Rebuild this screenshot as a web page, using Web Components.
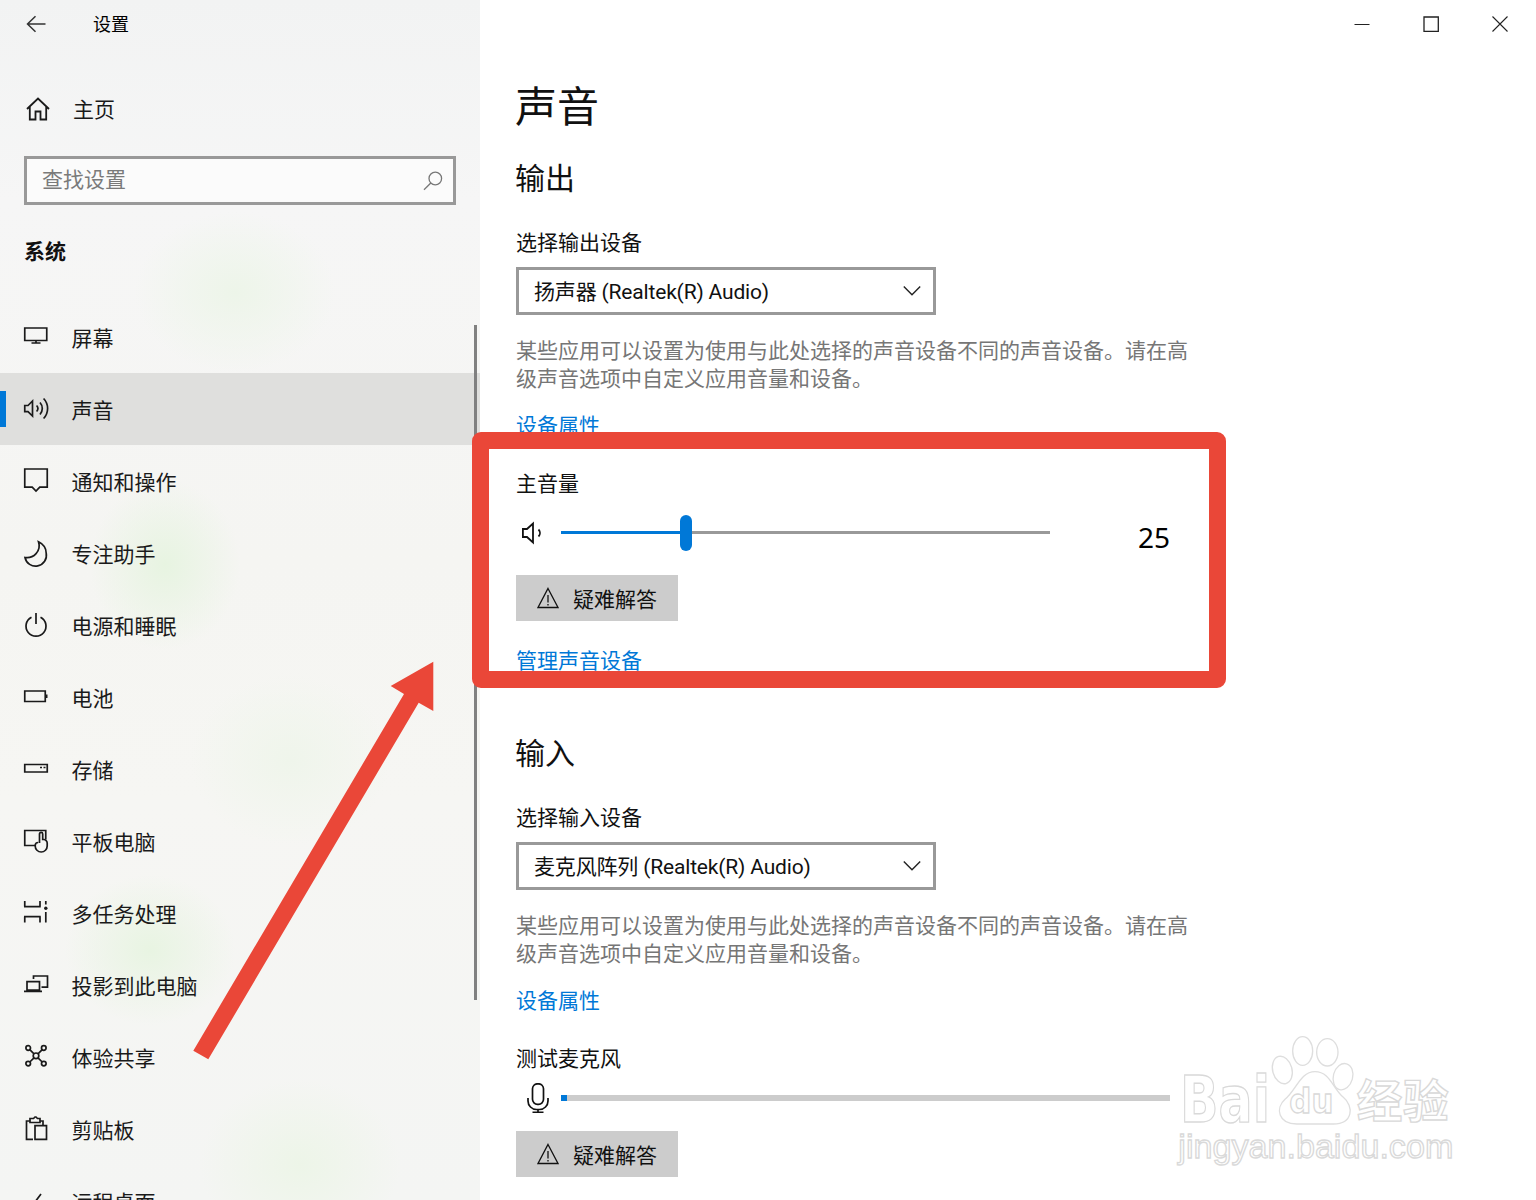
<!DOCTYPE html>
<html lang="zh-CN"><head><meta charset="utf-8"><title>设置</title>
<style>
html,body{margin:0;padding:0;height:1200px;overflow:hidden;background:#fff}
body{font-family:"Noto Sans CJK SC","Noto Sans",sans-serif;font-size:21px;color:#000}
</style></head>
<body>
<settings-app>
  <settings-sidebar slot="side">
    <nav-item icon="monitor">屏幕</nav-item>
    <nav-item icon="sound" selected>声音</nav-item>
    <nav-item icon="note">通知和操作</nav-item>
    <nav-item icon="moon">专注助手</nav-item>
    <nav-item icon="power">电源和睡眠</nav-item>
    <nav-item icon="battery">电池</nav-item>
    <nav-item icon="storage">存储</nav-item>
    <nav-item icon="tablet">平板电脑</nav-item>
    <nav-item icon="multi">多任务处理</nav-item>
    <nav-item icon="project">投影到此电脑</nav-item>
    <nav-item icon="share">体验共享</nav-item>
    <nav-item icon="clip">剪贴板</nav-item>
    <nav-item icon="remote">远程桌面</nav-item>
  </settings-sidebar>
  <sound-page slot="main"></sound-page>
  <page-annotations slot="over"></page-annotations>
</settings-app>
<script>
const ICONS={
monitor:'<path d="M.75 3h22v12.5H.75zM12 15.500v2.200M7.500 18h9"/>',
sound:'<path d="M.75 8.500H4L8.500 4v15L4 14.600H.75z"/><path d="M12.600 8.500a4.500 4.500 0 0 1 0 6M16 5.500a9 9 0 0 1 0 12M19.600 1.500a14.500 14.500 0 0 1 0 20"/>',
note:'<path d="M.75 0h22.500v18.200h-7.500L12 22l-3.800-3.800H.75z"/>',
moon:'<path d="M14.500.8C19 3 22.200 7.300 22.200 12.200A10.600 10.600 0 0 1 1 16.500C9.500 17.800 17.500 10 14.500.8z"/>',
power:'<path d="M7.500 4.200a10 10 0 1 0 9 0M12 0v11"/>',
battery:'<path d="M.75 6h20.500v10.500H.75z"/><path d="M22.500 9.500v3.500" stroke-width="2"/>',
storage:'<path d="M.75 7.500h22.500v7.500H.75z"/><path d="M16 10.500h2M19.500 10.500h2" stroke-width="1.500"/>',
tablet:'<path d="M11 16.500H.75V1.500h21v9"/><path d="M15.500 14V5a1.600 1.600 0 0 1 3.200 0v5.500h1a3.500 3.500 0 0 1 3.500 3.500v3a6 6 0 0 1-12 0v-.5a3 3 0 0 1 3-3"/>',
multi:'<path d="M.75 0v5.500M16 0v5.500M0 5.700h16.750M0 15.700h16.750M.75 15.700V21.500M16 15.700V21.500M21.800 0v3.500M21.800 11v10.500"/><circle cx="21.800" cy="7.300" r="1.700" fill="currentColor" stroke="none"/>',
project:'<path d="M9.500 6V3h14v11.200h-6"/><path d="M3 8.700h12.500v8.500H3zM0 18.300h18"/>',
share:'<circle cx="12" cy="10.800" r="2.800"/><circle cx="4.200" cy="3" r="2.300"/><circle cx="19.800" cy="3" r="2.300"/><circle cx="4.200" cy="18.600" r="2.300"/><circle cx="19.800" cy="18.600" r="2.300"/><path d="M5.800 4.600 10 8.800M18.200 4.600 14 8.800M5.800 17 10 12.800M18.200 17 14 12.800"/>',
clip:'<path d="M9 22.300H2.500V4H6M16 4h3v5"/><path d="M6 5.500V1.500h3.500L11 0h1l1.500 1.500H16v4z"/><path d="M11 8.700h11.500v13.600H11z"/>',
remote:'<path d="M3 12l5 5 9-12"/>'
};
function svg(name,size=24){return `<svg width="${size}" height="${size}" viewBox="0 0 24 24" fill="none" stroke="currentColor" stroke-width="1.700">${ICONS[name]}</svg>`}
function def(tag,html){
  customElements.define(tag,class extends HTMLElement{
    constructor(){super();const r=this.attachShadow({mode:'open'});r.innerHTML=typeof html==='function'?html(this):html;}
  });
}
def('settings-app',`<style>
:host{display:flex;width:1536px;height:1200px;position:relative;overflow:hidden}
.s{width:480px;flex:none}.m{flex:1;min-width:0}
</style><div class="s"><slot name="side"></slot></div><div class="m"><slot name="main"></slot></div><slot name="over"></slot>`);

def('settings-sidebar',`<style>
:host{display:block;height:1200px;overflow:hidden;position:relative;
background:
radial-gradient(ellipse 100px 80px at 235px 292px,#edf5e9 0,rgba(237,245,233,0) 100%),
radial-gradient(ellipse 75px 85px at 165px 565px,#e7f4e1 0,rgba(231,244,225,0) 100%),
radial-gradient(ellipse 100px 85px at 290px 760px,#eff5eb 0,rgba(239,245,235,0) 100%),
radial-gradient(ellipse 85px 75px at 150px 950px,#e8f4e2 0,rgba(232,244,226,0) 100%),
radial-gradient(ellipse 100px 85px at 300px 1165px,#edf5e8 0,rgba(237,245,232,0) 100%),
linear-gradient(180deg,#f2f3f3 0,#f6f6f6 200px,#f5f5f2 560px,#f6f6f3 800px,#f4f5f3 1200px)}
.bar{height:48px;display:flex;align-items:center;padding-left:24px;box-sizing:border-box}
.back{width:69px;height:48px;display:flex;align-items:center;color:#333;flex:none}
.t{font-size:18px;line-height:22px;padding-bottom:2px;margin-left:0}
.home{height:72px;margin-top:25px;display:flex;align-items:center;padding-left:26px;color:#1a1a1a}
.home span{margin-left:23px;line-height:26px;padding-bottom:2px}
.search{margin:11px 24px 0;height:49px;box-sizing:border-box;border:3px solid #999;background:rgba(255,255,255,.55);display:flex;align-items:center;justify-content:space-between;padding:0 10px 0 15px;color:#7a7a7a}
.search span{line-height:24px;padding-bottom:6px}
.search svg{display:block}
h2{font:inherit;font-weight:700;margin:33px 0 35px 24px;line-height:24px;padding-bottom:4px;color:#111}
.thumb{position:absolute;left:474px;top:325px;width:3px;height:675px;background:#808080}
</style>
<div class="bar"><div class="back"><svg width="24" height="24" viewBox="0 0 24 24" fill="none" stroke="currentColor" stroke-width="1.500"><path d="M21.500 12H3.500M11.500 4.200 3.500 12l8 7.800"/></svg></div><span class="t">设置</span></div>
<div class="home"><svg width="24" height="24" viewBox="0 0 24 24" fill="none" stroke="#1a1a1a" stroke-width="1.800"><path d="M1 12 12 1.500 23 12M3.800 10v12.500h5.700v-8h5v8h5.700V10"/></svg><span>主页</span></div>
<div class="search"><span>查找设置</span><svg width="20" height="20" viewBox="0 0 20 20" fill="none" stroke="#777" stroke-width="1.300"><circle cx="12.300" cy="7.500" r="6.300"/><path d="M7.800 12 1 18.800"/></svg></div>
<h2>系统</h2>
<slot></slot>
<div class="thumb"></div>`);

def('nav-item',el=>`<style>
:host{display:flex;align-items:center;height:72px;padding-left:24px;position:relative;color:#1a1a1a;box-sizing:border-box}
:host([selected]){background:#dfdfdd}
:host([selected])::before{content:"";position:absolute;left:0;top:18px;width:6px;height:36px;background:#0078d7}
svg{display:block;flex:none;margin-right:23.500px;overflow:visible}
span{line-height:28px}
</style>${svg(el.getAttribute('icon'))}<span><slot></slot></span>`);

def('window-controls',`<style>
:host{display:flex;justify-content:flex-end;height:48px;padding-right:2px;color:#222}
div{width:69px;height:48px;display:flex;align-items:center;justify-content:center}
svg{display:block}
</style>
<div><svg width="16" height="16" viewBox="0 0 16 16" fill="none" stroke="currentColor"><path d="M.5 8.500h15"/></svg></div>
<div><svg width="16" height="16" viewBox="0 0 16 16" fill="none" stroke="currentColor" stroke-width="1.300"><path d="M1 1h14.300v14.300H1z"/></svg></div>
<div><svg width="16" height="16" viewBox="0 0 16 16" fill="none" stroke="currentColor" stroke-width="1.100"><path d="M.5.500l15 15M15.500.500l-15 15"/></svg></div>`);

def('select-box',`<style>
:host{display:flex;align-items:center;justify-content:space-between;width:420px;height:48px;box-sizing:border-box;border:3px solid #999;padding:0 12px 0 15px;color:#111}
span{line-height:28px;padding-top:1px;white-space:nowrap;letter-spacing:-.17px;font-family:Roboto,"Noto Sans CJK SC",sans-serif}
svg{display:block;flex:none}
</style><span><slot></slot></span><svg width="18" height="12" viewBox="0 0 18 12" fill="none" stroke="#222" stroke-width="1.400"><path d="M.8 1.500 9 9.800l8.200-8.300"/></svg>`);

def('help-text',`<style>:host{display:block;width:676px;line-height:28px;color:#767676}</style><slot></slot>`);
def('link-text',`<style>:host{display:block;line-height:24px;padding-bottom:4px;color:#0078d7}</style><slot></slot>`);
def('field-label',`<style>:host{display:block;line-height:24px;padding-bottom:4px;color:#111}</style><slot></slot>`);

def('fix-button',`<style>
:host{display:flex;align-items:center;width:162px;height:46px;background:#ccc;box-sizing:border-box;padding-left:21px;color:#111}
svg{display:block;margin-right:14px;flex:none}span{line-height:28px}
</style><svg width="22" height="22" viewBox="0 0 22 22" fill="none" stroke="#111" stroke-width="1.300"><path d="M11 1.500 21 20.500H1z"/><path d="M11 8v7.500M11 17v1.500"/></svg><span><slot></slot></span>`);

def('volume-slider',`<style>
:host{display:flex;align-items:center;height:36px;width:654px}
.ic{width:45px;flex:none;display:flex;padding-left:6px;box-sizing:border-box}
.ic svg{display:block}
.tr{width:489px;flex:none;display:flex;align-items:center}
.f{width:119px;height:3px;margin-bottom:1px;background:#0078d7}
.th{width:12px;height:36px;border-radius:6px;background:#0078d7}
.r{flex:1;height:3px;margin-bottom:1px;background:#999}
.v{flex:1;text-align:right;font:28px/36px "Noto Sans",sans-serif;padding-top:9px;box-sizing:border-box;height:46px}
</style>
<div class="ic"><svg width="24" height="24" viewBox="0 0 24 24" fill="none" stroke="#111" stroke-width="1.800"><path d="M.9 8H5l6-5.500v19L5 16H.9z"/><path d="M16.500 8.500a5 5 0 0 1 0 7"/></svg></div>
<div class="tr"><div class="f"></div><div class="th"></div><div class="r"></div></div>
<div class="v">25</div>`);

def('mic-meter',`<style>
:host{display:flex;align-items:center;height:30px;width:654px}
.ic{width:45px;flex:none;padding-left:10px;box-sizing:border-box}.ic svg{display:block}
.b{flex:1;height:6px;background:#ccc}
.l{width:6px;height:6px;background:#0078d7}
</style>
<div class="ic"><svg width="24" height="30" viewBox="0 0 24 30" fill="none" stroke="#111" stroke-width="1.700"><rect x="6.500" y=".8" width="11" height="20.500" rx="5"/><path d="M2 15v3a8.500 8.500 0 0 0 8.500 8.500h3A8.500 8.500 0 0 0 22 18v-3M12 26.500v3M6.500 29.300h11"/></svg></div>
<div class="b"><div class="l"></div></div>`);

def('sound-page',`<style>
:host{display:block;height:1200px;overflow:hidden}
.c{padding-left:36px}
h1{font:inherit;font-size:42px;line-height:58px;margin:27px 0 0 -1px;font-weight:400;color:#111}
h2{font:inherit;font-size:30px;line-height:38px;margin:24px 0 0 -1px;font-weight:400;color:#111}
.a{margin-top:34px}.b{margin-top:10px}.d{margin-top:20px}.e{margin-top:21px}
.g{margin-top:30px}.h{margin-top:17px}.i{margin-top:24px}.j{margin-top:26px}
h2.k{margin-top:57px}
.m{margin-top:10px}.n{margin-top:18px}
</style>
<window-controls></window-controls>
<div class="c">
<h1>声音</h1>
<h2>输出</h2>
<field-label class="a">选择输出设备</field-label>
<select-box class="b">扬声器 (Realtek(R) Audio)</select-box>
<help-text class="d">某些应用可以设置为使用与此处选择的声音设备不同的声音设备。请在高级声音选项中自定义应用音量和设备。</help-text>
<link-text class="e">设备属性</link-text>
<field-label class="g">主音量</field-label>
<volume-slider class="h"></volume-slider>
<fix-button class="i">疑难解答</fix-button>
<link-text class="j">管理声音设备</link-text>
<h2 class="k">输入</h2>
<field-label class="a">选择输入设备</field-label>
<select-box class="b">麦克风阵列 (Realtek(R) Audio)</select-box>
<help-text class="d">某些应用可以设置为使用与此处选择的声音设备不同的声音设备。请在高级声音选项中自定义应用音量和设备。</help-text>
<link-text class="e">设备属性</link-text>
<field-label class="g">测试麦克风</field-label>
<mic-meter class="m"></mic-meter>
<fix-button class="n">疑难解答</fix-button>
</div>`);

def('page-annotations',`<style>
:host{position:absolute;inset:0;display:block;pointer-events:none}
svg{position:absolute;overflow:visible}
.frame{position:absolute;left:472px;top:432px;width:754px;height:256px;box-sizing:border-box;border:17px solid #ea4738;border-radius:9px}
.wm{left:1150px;top:1020px}
text{fill:#fff;stroke:#d9d9d9;stroke-width:4}
</style>
<div class="frame"></div>
<svg style="left:0;top:0" width="1536" height="1200"><polygon fill="#ea4738" points="193.300,1050.700 208.300,1059.300 418.700,702.700 433.300,711 433.300,661.700 390.700,686 404,694"/></svg>
<svg class="wm" width="340" height="170" viewBox="0 0 1020 510">
<g fill="#fff" stroke="#dedede" stroke-width="4">
<ellipse cx="397" cy="150" rx="29" ry="42" transform="rotate(-15 397 150)"/>
<ellipse cx="458" cy="93" rx="30" ry="43"/>
<ellipse cx="532" cy="97" rx="32" ry="41"/>
<ellipse cx="579" cy="170" rx="29" ry="40" transform="rotate(15 579 170)"/>
<path d="M495 155C450 155 440 210 405 238C375 265 385 312 440 312H550C610 312 612 258 580 232C548 205 540 155 495 155Z"/>
</g>
<text x="90" y="305" font-family="DejaVu Sans" font-size="190" font-weight="700" textLength="270" lengthAdjust="spacingAndGlyphs">Bai</text>
<text x="418" y="280" font-family="DejaVu Sans" font-size="100" font-weight="700" textLength="132" lengthAdjust="spacingAndGlyphs">du</text>
<text x="620" y="293" font-family="Noto Sans CJK SC" font-size="137" font-weight="700" textLength="276">经验</text>
<text x="85" y="413" font-family="Liberation Sans" font-size="102" textLength="825" lengthAdjust="spacingAndGlyphs">jingyan.baidu.com</text>
</svg>`);
</script>
</body></html>
